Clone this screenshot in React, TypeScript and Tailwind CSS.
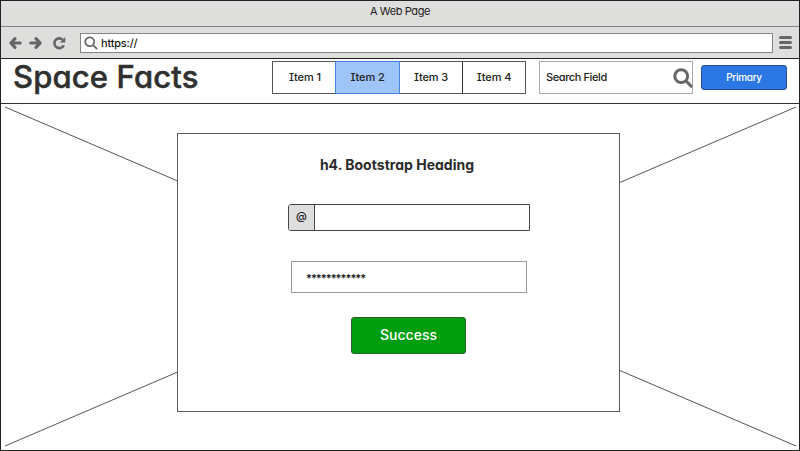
import type { ReactNode } from "react";

function Label({ children, className = "" }: { children: ReactNode; className?: string }) {
  return (
    <span className={`block whitespace-pre leading-none [font-feature-settings:'cv11','cv08'] ${className}`}>
      {children}
    </span>
  );
}

function Arrow({ className = "" }: { className?: string }) {
  return (
    <svg viewBox="0 0 14 14" className={`h-[14px] w-[14px] shrink-0 ${className}`} fill="none" stroke="#666" strokeWidth="3.2" strokeLinecap="round" strokeLinejoin="round">
      <path d="M12.2 7H4M7 2.6 2.8 7 7 11.4" />
    </svg>
  );
}

function Magnifier({ className = "", weight }: { className?: string; weight: number }) {
  return (
    <svg viewBox="0 0 20 20" className={`shrink-0 ${className}`} fill="none" stroke="#666" strokeWidth={weight} strokeLinecap="round">
      <circle cx="8.2" cy="8.2" r="6.4" />
      <path d="m13.3 13.3 4.8 4.8" />
    </svg>
  );
}

function BrowserChrome() {
  return (
    <>
      <div className="flex h-[26px] shrink-0 justify-center border-b border-[#858585] bg-[#dededc] pt-[5px]">
        <Label className="text-[11px] tracking-[-0.4px]">A Web Page</Label>
      </div>
      <div className="flex h-[32px] shrink-0 items-center border-b border-[#222] bg-[#dededc] pl-[7px]">
        <Arrow />
        <Arrow className="ml-[7px] rotate-180" />
        <svg viewBox="0 0 14 14" className="ml-[9px] h-[14px] w-[14px] shrink-0" fill="none" stroke="#666" strokeWidth="2.6">
          <path d="M10.6 3.6A4.9 4.9 0 1 0 11.8 9.2" />
          <path d="M13.3 1v5.6H7.7z" fill="#666" stroke="none" />
        </svg>
        <div className="ml-[14px] flex h-[20px] w-[693px] items-center border border-[#858585] bg-white pl-[3px]">
          <Magnifier className="h-[14px] w-[14px]" weight={2.5} />
          <Label className="ml-[3px] pt-px text-[11px] font-medium tracking-[-0.2px]">https://</Label>
        </div>
        <div className="ml-[6px] flex w-[13px] flex-col gap-[2px]">
          <div className="h-[3px] rounded-full bg-[#666]" />
          <div className="h-[3px] rounded-full bg-[#666]" />
          <div className="h-[3px] rounded-full bg-[#666]" />
        </div>
      </div>
    </>
  );
}

const items = [
  { label: "Item 1", style: "w-[62px] pl-[2px]" },
  { label: "Item 2", style: "-my-px w-[65px] border border-[#4285e0] bg-[#9fc4f8]" },
  { label: "Item 3", style: "w-[63px] border-r border-[#333]" },
  { label: "Item 4", style: "w-[62px]" },
];

function Header() {
  return (
    <header className="flex h-[45px] shrink-0 items-start border-b border-[#333] pl-[12px]">
      <h1 className="w-[259px] pt-[2px] text-[#303030]">
        <Label className="text-[31px] font-medium tracking-[0.15px] [-webkit-text-stroke:0.5px_#303030]">Space Facts</Label>
      </h1>
      <nav className="mt-[2px] flex h-[33px] w-[254px] border border-[#555]">
        {items.map(({ label, style }) => (
          <div key={label} className={`flex justify-center pt-[10px] ${style}`}>
            <Label className="text-[11px] font-medium tracking-[-0.1px]">{label}</Label>
          </div>
        ))}
      </nav>
      <div className="mt-[2px] ml-[13px] flex h-[33px] w-[154px] justify-between border border-[#aaa] pl-[6px]">
        <Label className="pt-[10px] text-[11px] font-medium tracking-[-0.4px]">Search Field</Label>
        <Magnifier className="mt-[6px] -mr-px h-[20px] w-[20px]" weight={3} />
      </div>
      <button className="mt-[6px] ml-[8px] flex h-[25px] w-[86px] justify-center rounded-[3px] border border-[#264f8c] bg-[#2b78e4] pt-[6px] text-white">
        <Label className="text-[10px] font-medium tracking-[-0.3px]">Primary</Label>
      </button>
    </header>
  );
}

function Login() {
  return (
    <section className="relative z-10 flex h-[279px] w-[443px] flex-col items-center border border-[#5c5c5c] bg-white pt-[24px]">
      <h4 className="text-[#2b2b2b]">
        <Label className="-ml-[3px] text-[14px] font-bold tracking-[0.02px]">h4. Bootstrap Heading</Label>
      </h4>
      <div className="mt-[32px] ml-[21px] flex h-[27px] w-[242px] rounded-l-[3px] border border-[#444]">
        <div className="flex w-[26px] justify-center rounded-l-[2px] border-r border-[#444] bg-[#dedede] pt-[6px]">
          <Label className="text-[11px] font-medium">@</Label>
        </div>
      </div>
      <div className="mt-[30px] ml-[21px] h-[32px] w-[236px] border border-[#999] pt-[11px] pl-[14px]">
        <Label className="text-[11px] font-semibold tracking-[-1px]">************</Label>
      </div>
      <button className="mt-[24px] ml-[20px] flex h-[37px] w-[115px] justify-center rounded-[3px] border border-[#295e2d] bg-[#009e0f] pt-[10px] text-white">
        <Label className="text-[14px] font-medium">Success</Label>
      </button>
    </section>
  );
}

export default function App() {
  return (
    <div className="flex h-[451px] w-[800px] flex-col overflow-hidden border border-[#222] bg-white font-['Inter',sans-serif] text-[#202020]">
      <BrowserChrome />
      <Header />
      <main className="relative flex min-h-0 flex-1 items-start pt-[29px] pl-[176px]">
        <svg viewBox="0 0 798 346" className="absolute inset-0 h-[346px] w-[798px]" stroke="#555" strokeWidth="1">
          <path d="M4 3 795 342M795 3 4 342" />
        </svg>
        <Login />
      </main>
    </div>
  );
}
